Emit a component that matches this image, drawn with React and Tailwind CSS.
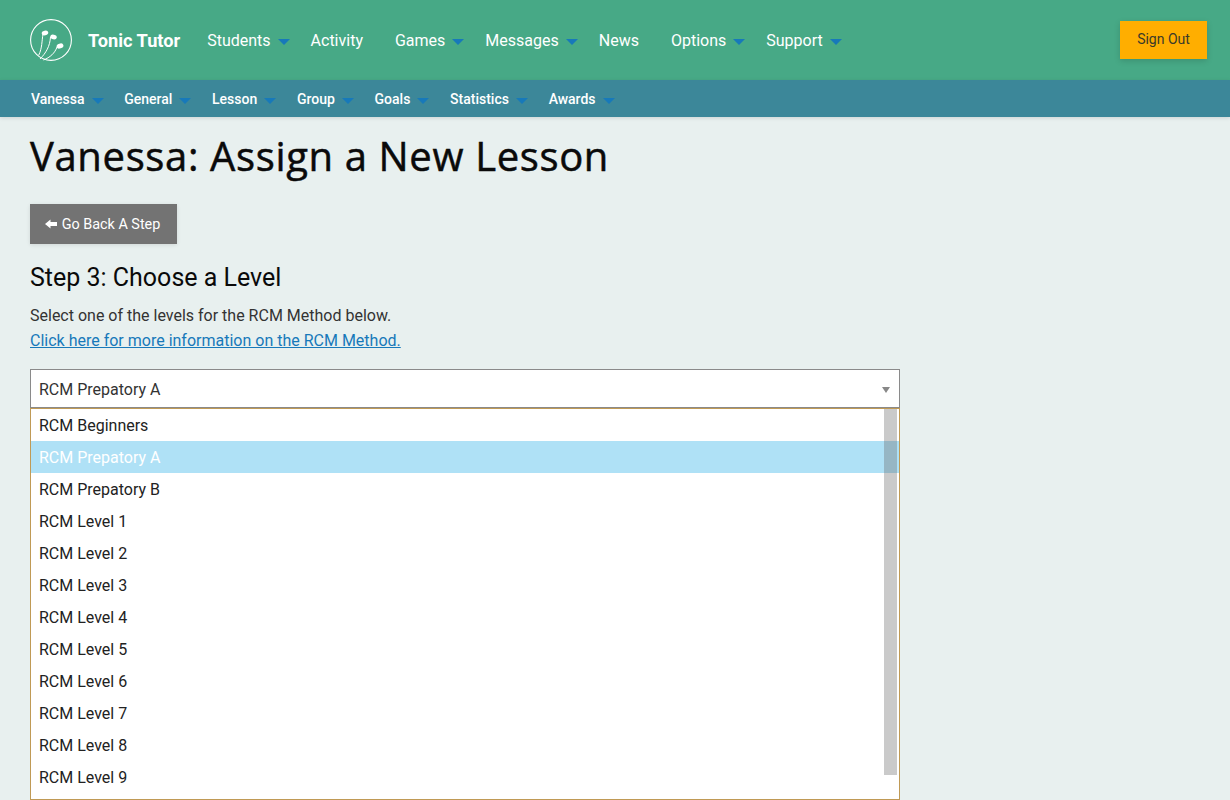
import React from 'react';

const mainNav = [
  { label: 'Students', caret: true },
  { label: 'Activity' },
  { label: 'Games', caret: true },
  { label: 'Messages', caret: true },
  { label: 'News' },
  { label: 'Options', caret: true },
  { label: 'Support', caret: true },
];

const subNav = ['Vanessa', 'General', 'Lesson', 'Group', 'Goals', 'Statistics', 'Awards'];

const levels = [
  'RCM Beginners',
  'RCM Prepatory A',
  'RCM Prepatory B',
  'RCM Level 1',
  'RCM Level 2',
  'RCM Level 3',
  'RCM Level 4',
  'RCM Level 5',
  'RCM Level 6',
  'RCM Level 7',
  'RCM Level 8',
  'RCM Level 9',
];

const Caret = () => (
  <span className="ml-[7px] mt-[2px] h-0 w-0 border-x-[6px] border-t-[6px] border-x-transparent border-t-[#1779ba]" />
);

const Logo = () => (
  <svg width="44" height="44" viewBox="0 0 44 44" fill="none" stroke="white" className="shrink-0">
    <circle cx="22" cy="22" r="20.4" strokeWidth="1.1" />
    <path d="M14 16c-1.200 7-.8 14-4.200 21" strokeWidth="1" />
    <path d="M21.500 19c-.5 9-4.500 16-10.500 22" strokeWidth="1" />
    <path d="M28 29c-2 6-7 10.500-13.500 13" strokeWidth="1" />
    <ellipse cx="16" cy="15" rx="3.300" ry="2.300" fill="white" stroke="none" transform="rotate(-12 16 15)" />
    <ellipse cx="24.500" cy="19" rx="3.300" ry="2.300" fill="white" stroke="none" transform="rotate(12 24.500 19)" />
    <ellipse cx="31" cy="28" rx="3.500" ry="2.400" fill="white" stroke="none" transform="rotate(-18 31 28)" />
  </svg>
);

export default function App() {
  return (
    <div className="h-[800px] overflow-hidden bg-[#e8f0ef] font-['Roboto',sans-serif] text-[#222]">
      <header className="flex h-20 items-center bg-[#47a986] pl-[29px] pr-[23px]">
        <Logo />
        <span className="ml-[15px] pt-[1px] text-[18.2px] font-bold text-white">Tonic Tutor</span>
        <nav className="ml-[27px] flex items-center pt-[2px]">
          {mainNav.map(item => (
            <a key={item.label} className={`flex items-center text-[16px] text-white ${item.caret ? 'mr-[21px]' : 'mr-8'}`}>
              {item.label}
              {item.caret && <Caret />}
            </a>
          ))}
        </nav>
        <button className="ml-auto h-[38px] w-[87px] bg-[#ffae00] pb-[2px] text-[14px] text-[#3a3a2a] shadow-[0_2px_6px_rgba(0,0,0,0.15)]">
          Sign Out
        </button>
      </header>

      <nav className="flex h-[37px] items-center bg-[#3c8799] pl-[31px] pt-[2px] shadow-[0_1px_4px_rgba(0,0,0,0.12)]">
        {subNav.map(label => (
          <a key={label} className="mr-[20.700px] flex items-center text-[14px] font-medium text-white">
            {label}
            <Caret />
          </a>
        ))}
      </nav>

      <main className="px-[30px]">
        <h1 className="mt-[11px] font-['Open_Sans',sans-serif] text-[40px] leading-[56px] font-medium tracking-[0.64px] text-[#0a0a0a] [-webkit-text-stroke:0.5px_#0a0a0a]">
          Vanessa: Assign a New Lesson
        </h1>

        <button className="mt-[20px] flex h-10 w-[147px] items-center justify-center bg-[#737373] pr-[2px] pt-[2px] text-[14.400px] text-white shadow-[0_1px_4px_rgba(0,0,0,0.1)]">
          <svg width="12" height="10" viewBox="0 0 12 10" fill="white" className="mr-[5px] mb-[2px]">
            <path d="M0 5l5.500-4.500V3H12v4H5.500v2.500z" />
          </svg>
          Go Back A Step
        </button>

        <h2 className="mt-[17px] text-[25px] leading-[34px] text-[#0a0a0a]">Step 3: Choose a Level</h2>

        <p className="mt-[8px] text-[16px] leading-[25px] text-[#333]">
          Select one of the levels for the RCM Method below.
          <br />
          <a className="text-[#1779ba] underline">Click here for more information on the RCM Method.</a>
        </p>

        <div className="mt-[16px] w-[870px]">
          <div className="flex h-[39px] items-center justify-between border border-[#8a8a8a] bg-white pl-2 pr-[9px] pt-[2px] text-[16px] text-[#333]">
            RCM Prepatory A
            <span className="h-0 w-0 border-x-[4px] border-t-[6px] border-x-transparent border-t-[#888]" />
          </div>
          <div className="relative h-[392px] border border-[#c09a55] bg-white">
            <ul>
              {levels.map(level => (
                <li
                  key={level}
                  className={`flex h-8 items-center pl-2 pt-[2px] text-[16px] ${level === 'RCM Prepatory A' ? 'bg-[#afe1f6] text-white' : 'text-[#222]'}`}
                >
                  {level}
                </li>
              ))}
            </ul>
            <div className="absolute right-[2px] top-0 h-[366px] w-[13px] bg-[#666]/35" />
          </div>
        </div>
      </main>
    </div>
  );
}
